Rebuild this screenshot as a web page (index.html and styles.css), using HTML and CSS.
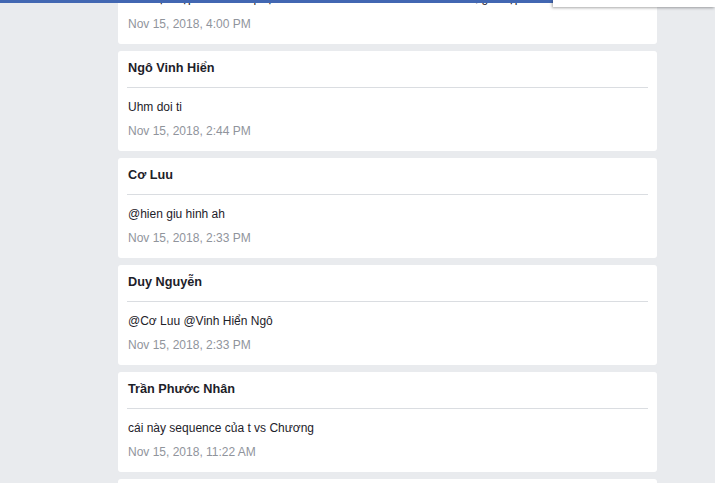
FILE: index.html
```html
<!DOCTYPE html>
<html lang="vi">
<head>
<meta charset="utf-8">
<title>Comments</title>
<link rel="stylesheet" href="styles.css">
</head>
<body>
<div class="topbar"></div>
<div class="dropdown"></div>
<main class="feed">
  <article class="card">
    <header class="card-head"><span class="name">Nguyễn Văn Hùng</span></header>
    <p class="msg msg-first">Tốc độ nhập 1 cái hình phụ để viết document chỉ chính mà bổ khi, giờ l ạp lên sau</p>
    <time class="when">Nov 15, 2018, 4:00 PM</time>
  </article>
  <article class="card">
    <header class="card-head"><span class="name">Ngô Vinh Hiển</span></header>
    <p class="msg">Uhm doi ti</p>
    <time class="when">Nov 15, 2018, 2:44 PM</time>
  </article>
  <article class="card">
    <header class="card-head"><span class="name">Cơ Luu</span></header>
    <p class="msg">@hien giu hinh ah</p>
    <time class="when">Nov 15, 2018, 2:33 PM</time>
  </article>
  <article class="card">
    <header class="card-head"><span class="name">Duy Nguyễn</span></header>
    <p class="msg">@Cơ Luu @Vinh Hiển Ngô</p>
    <time class="when">Nov 15, 2018, 2:33 PM</time>
  </article>
  <article class="card">
    <header class="card-head"><span class="name">Trần Phước Nhân</span></header>
    <p class="msg">cái này sequence của t vs Chương</p>
    <time class="when">Nov 15, 2018, 11:22 AM</time>
  </article>
  <article class="card">
    <header class="card-head"><span class="name">Ngô Vinh Hiển</span></header>
    <p class="msg">ok</p>
    <time class="when">Nov 15, 2018, 11:00 AM</time>
  </article>
</main>
</body>
</html>
```
FILE: styles.css
```css
html, body {
  margin: 0;
  padding: 0;
  background: #e9ebee;
  font-family: "Liberation Sans", Arial, sans-serif;
  color: #1d2129;
  overflow: hidden;
  height: 483px;
}
.topbar {
  position: fixed;
  top: 0;
  left: 0;
  right: 0;
  height: 3px;
  background: #4267b2;
  z-index: 5;
}
.dropdown {
  position: fixed;
  top: 0;
  left: 553px;
  width: 162px;
  height: 7px;
  background: #fff;
  box-shadow: -1px 1px 3px rgba(0,0,0,0.35);
  z-index: 6;
}
.feed {
  display: flex;
  flex-direction: column;
  gap: 7px;
  width: 539px;
  margin: -56px 0 0 118px;
}
.card {
  background: #fff;
  border-radius: 3px;
  padding: 0 9px 12px;
  height: 100px;
  box-sizing: border-box;
  display: flex;
  flex-direction: column;
  flex-shrink: 0;
}
.card-head {
  height: 37px;
  box-sizing: border-box;
  padding: 7px 1px 0;
  border-bottom: 1px solid #dadde1;
}
.name {
  font-size: 12.7px;
  font-weight: bold;
  line-height: 18px;
}
.msg {
  margin: 11px 0 0 1px;
  font-size: 12px;
  line-height: 16px;
  white-space: nowrap;
  overflow: hidden;
}
.msg-first {
  margin-top: 9px;
  margin-bottom: 2px;
}
.when {
  display: block;
  margin: 8px 0 0 1px;
  font-size: 12px;
  line-height: 16px;
  color: #90949c;
}
```
